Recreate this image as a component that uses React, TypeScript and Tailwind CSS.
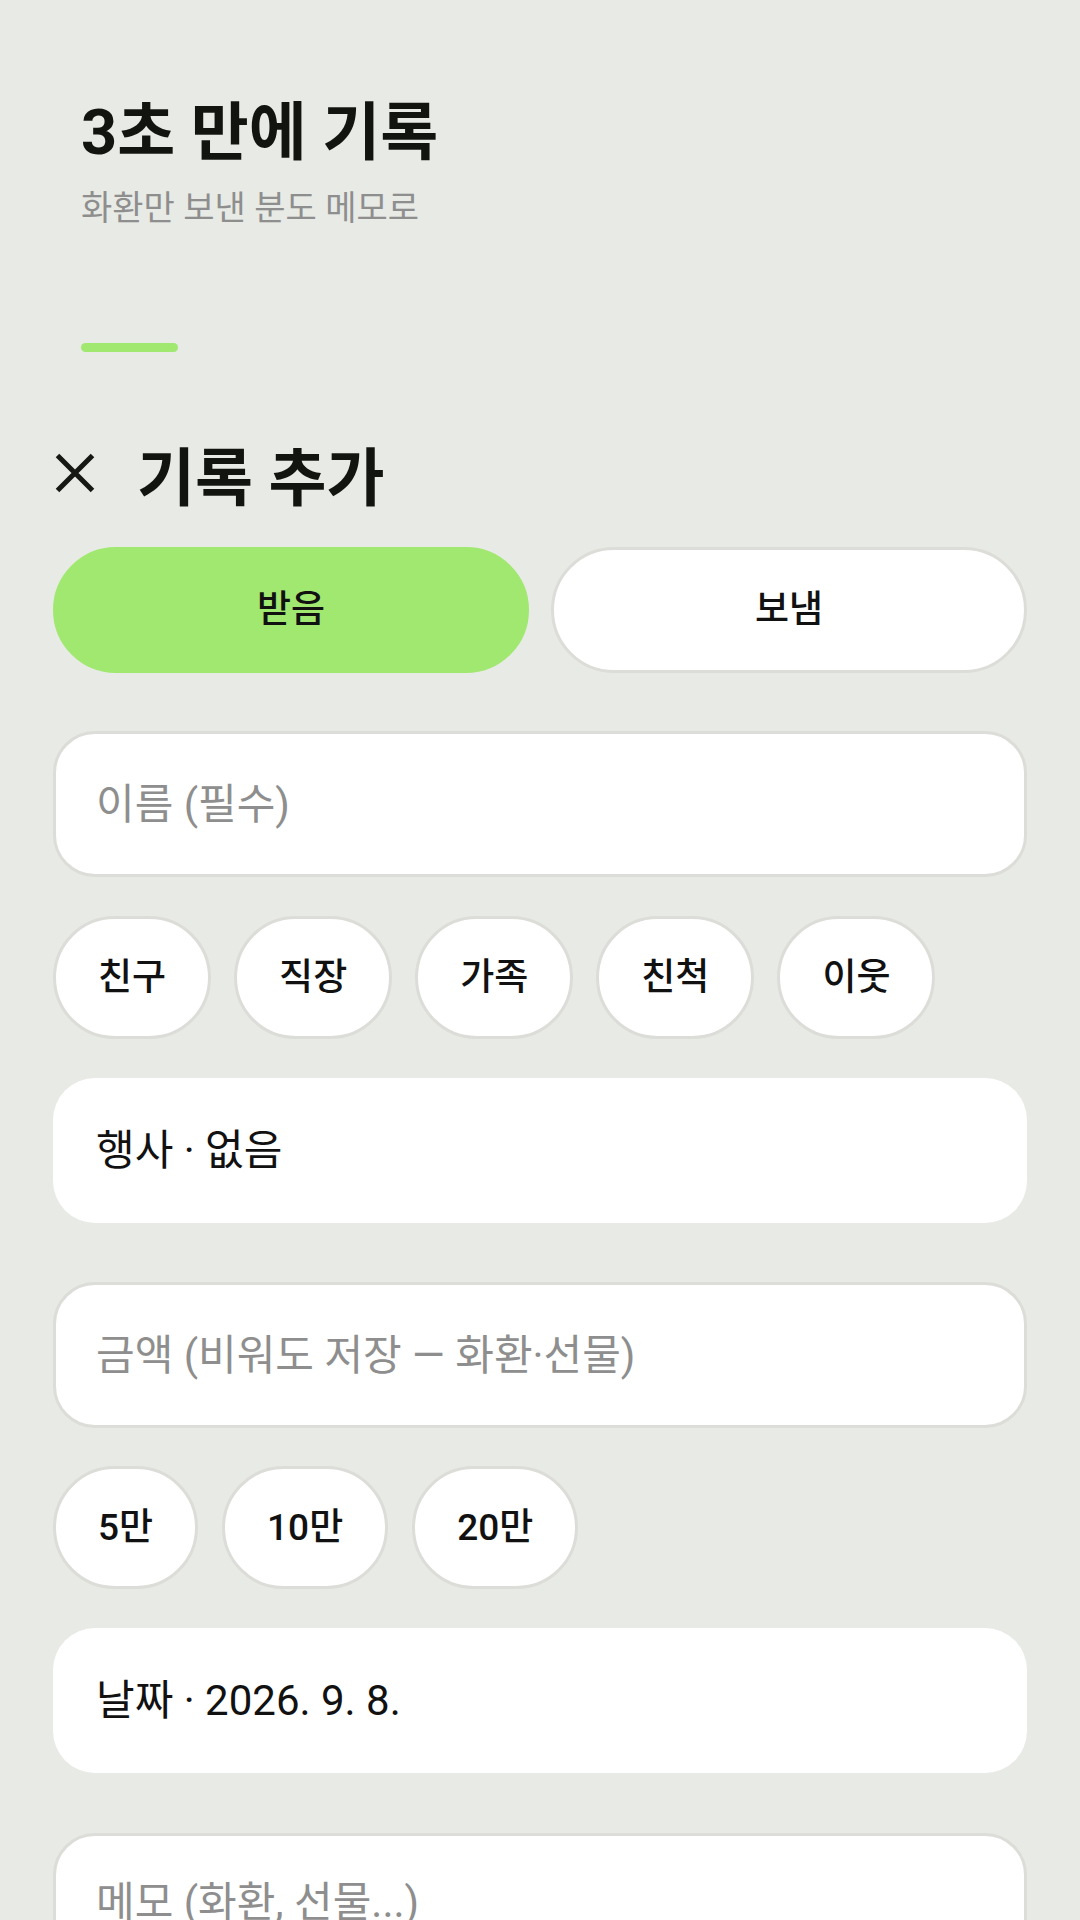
import React from "react";

function CloseIcon() {
  return (
    <svg width="44" height="44" viewBox="0 0 44 44" className="shrink-0 mb-[12px]" aria-hidden>
      <path d="M4.5 4.5 L39.5 39.5 M39.5 4.5 L4.5 39.5" stroke="#161813" strokeWidth="5" strokeLinecap="butt" fill="none" />
    </svg>
  );
}

const chipCls =
  "h-[123px] px-[42px] rounded-full bg-white border-[3px] border-[#dcddd8] flex items-center justify-center text-[37px] font-medium text-[#111111] leading-none";

export default function App() {
  const rels = ["친구", "직장", "가족", "친척", "이웃"];
  const amounts = ["5만", "10만", "20만"];
  return (
    <div className="w-[1080px] h-[1920px] overflow-hidden bg-[#e8eae5] font-[Roboto,'Noto_Sans_CJK_KR',sans-serif] text-[#111111]">
      <header className="pl-[81px] pt-[95px]">
        <h1 className="text-[63px] font-bold leading-[76px] text-[#11140f]">3초 만에 기록</h1>
        <p className="mt-[16px] text-[34px] leading-[42px] text-[#8e8e8e]">화환만 보낸 분도 메모로</p>
        <div className="mt-[114px] w-[97px] h-[9px] rounded-full bg-[#a0e870]" />
      </header>

      <main className="px-[53px] flex flex-col">
        <div className="mt-[89px] h-[76px] flex items-center">
          <CloseIcon />
          <h2 className="ml-[40px] text-[63px] font-bold leading-[76px] text-[#11140f]">기록 추가</h2>
        </div>

        <div className="mt-[30px] grid grid-cols-2 gap-[22px]">
          <button className="h-[126px] rounded-full bg-[#a0e870] border-[3px] border-[#a0e870] text-[37px] font-medium text-[#111111]">
            받음
          </button>
          <button className="h-[126px] rounded-full bg-white border-[3px] border-[#dcddd8] text-[37px] font-medium text-[#111111]">
            보냄
          </button>
        </div>

        <input
          className="mt-[58px] h-[146px] w-full rounded-[42px] bg-white border-[3px] border-[#dcddd8] px-[40px] text-[42px] text-[#111111] placeholder:text-[#8e8e8e] outline-none"
          placeholder="이름 (필수)"
        />

        <div className="mt-[39px] flex gap-[23px]">
          {rels.map((r) => (
            <button key={r} className={chipCls}>
              {r}
            </button>
          ))}
        </div>

        <button className="mt-[39px] h-[145px] w-full rounded-[42px] bg-white border-[3px] border-transparent px-[40px] text-left text-[42px] text-[#111111]">
          행사 · 없음
        </button>

        <input
          className="mt-[59px] h-[146px] w-full rounded-[42px] bg-white border-[3px] border-[#dcddd8] px-[40px] text-[42px] text-[#111111] placeholder:text-[#8e8e8e] outline-none"
          placeholder="금액 (비워도 저장 — 화환·선물)"
        />

        <div className="mt-[38px] flex gap-[24px]">
          {amounts.map((a) => (
            <button key={a} className={chipCls}>
              {a}
            </button>
          ))}
        </div>

        <button className="mt-[39px] h-[145px] w-full rounded-[42px] bg-white border-[3px] border-transparent px-[40px] text-left text-[42px] text-[#111111]">
          날짜 · 2026. 9. 8.
        </button>

        <textarea
          className="mt-[60px] h-[240px] w-full resize-none rounded-[42px] bg-white border-[3px] border-[#dcddd8] px-[40px] pt-[38px] text-[42px] leading-[58px] text-[#111111] placeholder:text-[#8e8e8e] outline-none"
          placeholder="메모 (화환, 선물...)"
        />
      </main>
    </div>
  );
}
